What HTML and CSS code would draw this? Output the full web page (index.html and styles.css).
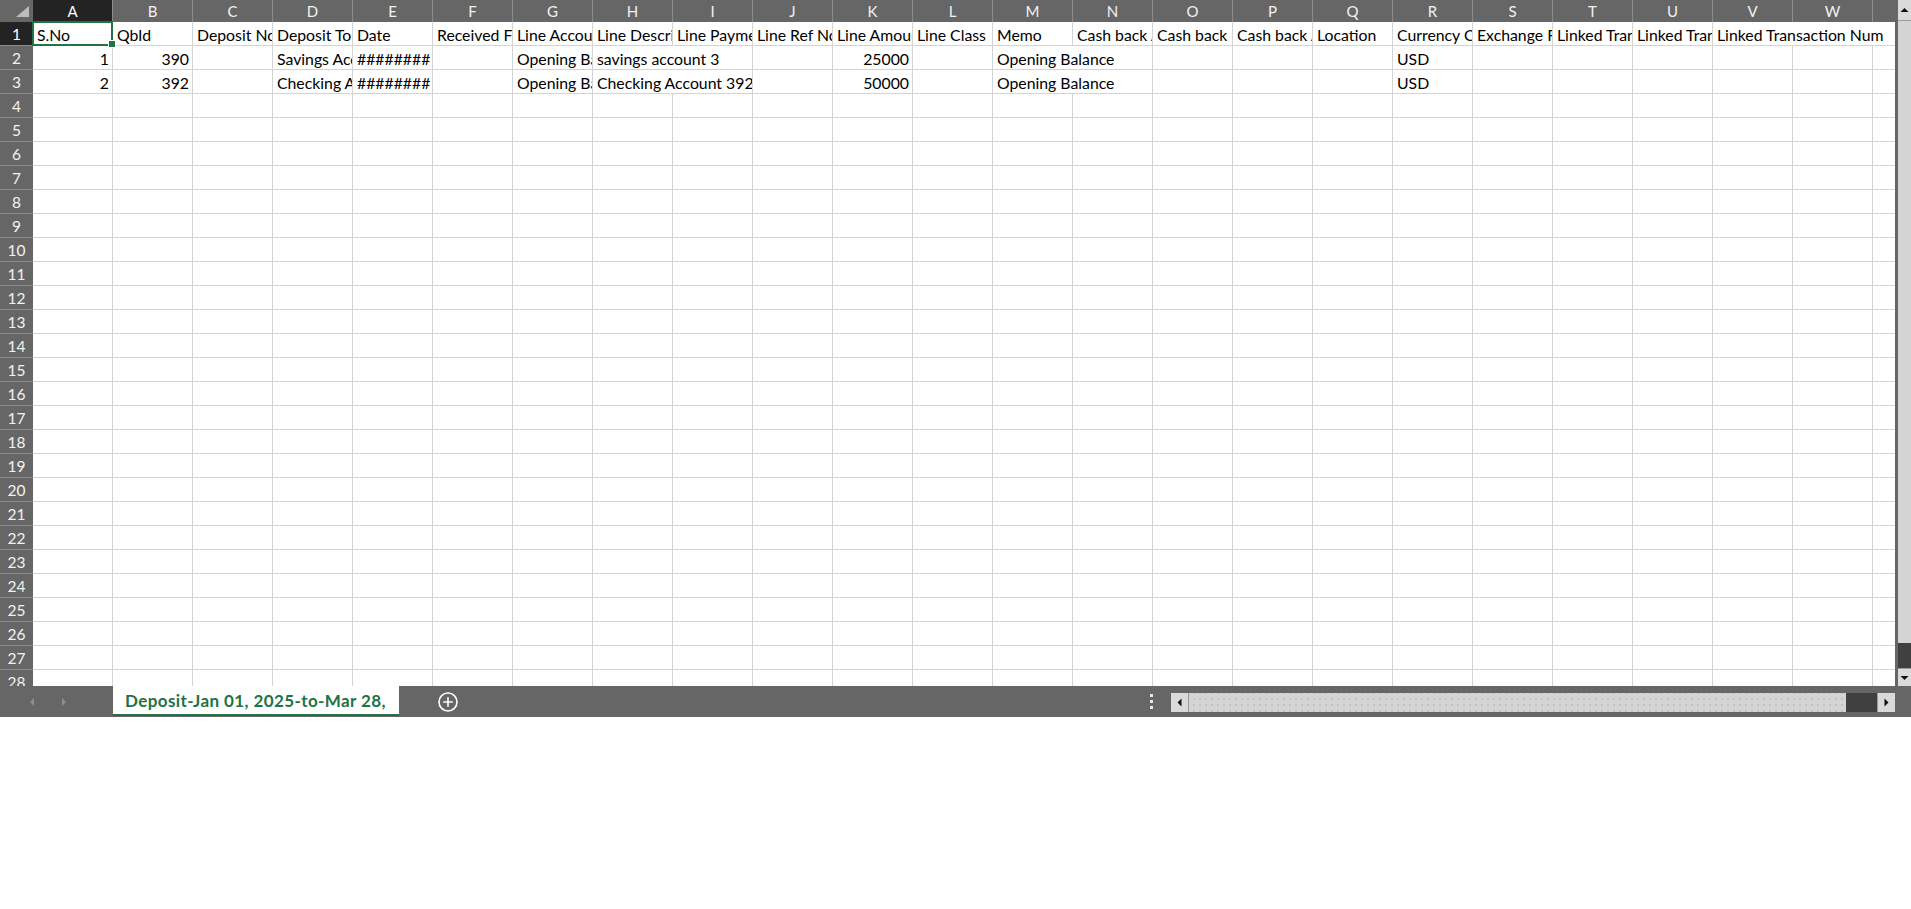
FILE: index.html
```html
<!DOCTYPE html>
<html>
<head>
<meta charset="utf-8">
<title>Deposit</title>
<link rel="stylesheet" href="styles.css">
</head>
<body>
<div class="app">
  <div class="main">
    <div class="sheet">
      <div class="row colheads">
        <div class="corner"><svg width="33" height="22" viewBox="0 0 33 22"><polygon points="29,6 29,17 16,17" fill="#bcbcbc"/></svg></div>
        <div class="ch sel">A</div><div class="ch">B</div><div class="ch">C</div><div class="ch">D</div><div class="ch">E</div><div class="ch">F</div><div class="ch">G</div><div class="ch">H</div><div class="ch">I</div><div class="ch">J</div><div class="ch">K</div><div class="ch">L</div><div class="ch">M</div><div class="ch">N</div><div class="ch">O</div><div class="ch">P</div><div class="ch">Q</div><div class="ch">R</div><div class="ch">S</div><div class="ch">T</div><div class="ch">U</div><div class="ch">V</div><div class="ch">W</div><div class="ch last"></div>
      </div>
      <div class="row">
        <div class="rh sel">1</div>
        <div class="cell active">S.No<span class="selbox"></span><span class="handle"></span></div>
        <div class="cell">QbId</div>
        <div class="cell">Deposit No</div>
        <div class="cell">Deposit To</div>
        <div class="cell">Date</div>
        <div class="cell">Received From</div>
        <div class="cell">Line Account</div>
        <div class="cell">Line Description</div>
        <div class="cell">Line Payment Method</div>
        <div class="cell">Line Ref No</div>
        <div class="cell">Line Amount</div>
        <div class="cell">Line Class</div>
        <div class="cell">Memo</div>
        <div class="cell">Cash back Account</div>
        <div class="cell">Cash back Memo</div>
        <div class="cell">Cash back Amount</div>
        <div class="cell">Location</div>
        <div class="cell">Currency Code</div>
        <div class="cell">Exchange Rate</div>
        <div class="cell">Linked Transaction Id</div>
        <div class="cell">Linked Transaction Type</div>
        <div class="cell span3">Linked Transaction Num</div>
      </div>
      <div class="row">
        <div class="rh">2</div>
        <div class="cell num">1</div>
        <div class="cell num">390</div>
        <div class="cell"></div>
        <div class="cell">Savings Account 3</div>
        <div class="cell">########</div>
        <div class="cell"></div>
        <div class="cell">Opening Balance</div>
        <div class="cell span2">savings account 3</div>
        <div class="cell"></div>
        <div class="cell num">25000</div>
        <div class="cell"></div>
        <div class="cell span2">Opening Balance</div>
        <div class="cell"></div><div class="cell"></div><div class="cell"></div>
        <div class="cell">USD</div>
        <div class="cell"></div><div class="cell"></div><div class="cell"></div><div class="cell"></div><div class="cell"></div><div class="cell last"></div>
      </div>
      <div class="row">
        <div class="rh">3</div>
        <div class="cell num">2</div>
        <div class="cell num">392</div>
        <div class="cell"></div>
        <div class="cell">Checking Account 392</div>
        <div class="cell">########</div>
        <div class="cell"></div>
        <div class="cell">Opening Balance</div>
        <div class="cell span2">Checking Account 392</div>
        <div class="cell"></div>
        <div class="cell num">50000</div>
        <div class="cell"></div>
        <div class="cell span2">Opening Balance</div>
        <div class="cell"></div><div class="cell"></div><div class="cell"></div>
        <div class="cell">USD</div>
        <div class="cell"></div><div class="cell"></div><div class="cell"></div><div class="cell"></div><div class="cell"></div><div class="cell last"></div>
      </div>
      <div class="row"><div class="rh">4</div><div class="blank"></div></div>
      <div class="row"><div class="rh">5</div><div class="blank"></div></div>
      <div class="row"><div class="rh">6</div><div class="blank"></div></div>
      <div class="row"><div class="rh">7</div><div class="blank"></div></div>
      <div class="row"><div class="rh">8</div><div class="blank"></div></div>
      <div class="row"><div class="rh">9</div><div class="blank"></div></div>
      <div class="row"><div class="rh">10</div><div class="blank"></div></div>
      <div class="row"><div class="rh">11</div><div class="blank"></div></div>
      <div class="row"><div class="rh">12</div><div class="blank"></div></div>
      <div class="row"><div class="rh">13</div><div class="blank"></div></div>
      <div class="row"><div class="rh">14</div><div class="blank"></div></div>
      <div class="row"><div class="rh">15</div><div class="blank"></div></div>
      <div class="row"><div class="rh">16</div><div class="blank"></div></div>
      <div class="row"><div class="rh">17</div><div class="blank"></div></div>
      <div class="row"><div class="rh">18</div><div class="blank"></div></div>
      <div class="row"><div class="rh">19</div><div class="blank"></div></div>
      <div class="row"><div class="rh">20</div><div class="blank"></div></div>
      <div class="row"><div class="rh">21</div><div class="blank"></div></div>
      <div class="row"><div class="rh">22</div><div class="blank"></div></div>
      <div class="row"><div class="rh">23</div><div class="blank"></div></div>
      <div class="row"><div class="rh">24</div><div class="blank"></div></div>
      <div class="row"><div class="rh">25</div><div class="blank"></div></div>
      <div class="row"><div class="rh">26</div><div class="blank"></div></div>
      <div class="row"><div class="rh">27</div><div class="blank"></div></div>
      <div class="row"><div class="rh">28</div><div class="blank"></div></div>
    </div>
    <div class="vscroll">
      <div class="vbtn"><svg width="13" height="20" viewBox="0 0 13 20"><polygon points="2.5,12 10.5,12 6.5,8" fill="#111"/></svg></div>
      <div class="vtrack"></div>
      <div class="vthumb"></div>
      <div class="vbtn down"><svg width="13" height="17" viewBox="0 0 13 17"><polygon points="2.5,7 10.5,7 6.5,11" fill="#111"/></svg></div>
    </div>
  </div>
  <div class="tabbar">
    <div class="nav">
      <svg class="navarrow" width="6" height="10" viewBox="0 0 6 10"><polygon points="5,1 5,9 1,5" fill="#8e8e8e"/></svg>
      <svg class="navarrow" width="6" height="10" viewBox="0 0 6 10"><polygon points="1,1 1,9 5,5" fill="#8e8e8e"/></svg>
    </div>
    <div class="tab">Deposit-Jan 01, 2025-to-Mar 28,</div>
    <div class="add"><svg width="22" height="22" viewBox="0 0 22 22"><circle cx="11" cy="11" r="9" fill="none" stroke="#fff" stroke-width="1.6"/><path d="M11 6.2V15.8M6.2 11H15.8" stroke="#fff" stroke-width="1.6"/></svg></div>
    <div class="spacer"></div>
    <div class="dots"><span></span><span></span><span></span></div>
    <div class="hscroll">
      <div class="hbtn"><svg width="17" height="19" viewBox="0 0 17 19"><polygon points="10.5,5.5 10.5,13.5 6.5,9.5" fill="#111"/></svg></div>
      <div class="htrack"></div>
      <div class="hthumb"></div>
      <div class="hbtn right"><svg width="17" height="19" viewBox="0 0 17 19"><polygon points="6.5,5.5 6.5,13.5 10.5,9.5" fill="#111"/></svg></div>
    </div>
  </div>
</div>
</body>
</html>
```

FILE: styles.css
```css
html, body {
  margin: 0;
  padding: 0;
  background: #ffffff;
}

.app {
  width: 1911px;
  font-family: Lato, "Open Sans", "Liberation Sans", sans-serif;
}

.main {
  display: flex;
  height: 686px;
  background: #666666;
  gap: 3px;
}

.sheet {
  width: 1895px;
  flex: 0 0 1895px;
  height: 686px;
  overflow: hidden;
  background: #ffffff;
}

.row {
  display: grid;
  grid-template-columns: 33px repeat(23, 80px) 22px;
  height: 24px;
}

.colheads {
  height: 22px;
  background: #666666;
}

.corner {
  height: 22px;
  background: #666666;
}

.corner svg {
  display: block;
}

.ch {
  height: 22px;
  box-sizing: border-box;
  border-right: 1px solid #8c8c8c;
  color: #f2f2f2;
  font-size: 15px;
  line-height: 22px;
  text-align: center;
}

.ch.sel {
  background: #232323;
  color: #ffffff;
}

.ch.last {
  border-right: none;
}

.rh {
  background: #666666;
  color: #f2f2f2;
  font-size: 15.5px;
  line-height: 24px;
  text-align: center;
  box-sizing: border-box;
  border-bottom: 1px solid #8c8c8c;
  height: 24px;
}

.rh.sel {
  background: #232323;
  color: #ffffff;
}

.cell {
  position: relative;
  box-sizing: border-box;
  height: 24px;
  border-right: 1px solid #d4d4d4;
  border-bottom: 1px solid #d4d4d4;
  padding: 0 3px 0 4px;
  overflow: hidden;
  white-space: nowrap;
  font-size: 15.8px;
  line-height: 25px;
  color: #000000;
}

.cell.active {
  overflow: visible;
}

.cell.num {
  text-align: right;
}

.cell.span2 {
  grid-column: span 2;
}

.cell.span3 {
  grid-column: span 3;
  border-right: none;
}

.cell.last {
  border-right: none;
}

.selbox {
  position: absolute;
  left: -1px;
  top: -1px;
  width: 81px;
  height: 25px;
  box-sizing: border-box;
  border: 2px solid #217346;
  pointer-events: none;
}

.handle {
  position: absolute;
  right: -4px;
  bottom: -3px;
  width: 6px;
  height: 6px;
  background: #217346;
  border: 1px solid #ffffff;
  box-sizing: content-box;
  z-index: 2;
}

.blank {
  grid-column: span 24;
  box-sizing: border-box;
  height: 24px;
  border-bottom: 1px solid #d4d4d4;
  background: repeating-linear-gradient(90deg, transparent 0 79px, #d4d4d4 79px 80px);
}

.vscroll {
  width: 13px;
  flex: 0 0 13px;
  display: flex;
  flex-direction: column;
  background: #d4d4d4;
}

.vbtn {
  height: 20px;
  background: #dadada;
  border-bottom: 1px solid #9a9a9a;
}

.vbtn svg, .hbtn svg {
  display: block;
}

.vbtn.down {
  height: 17px;
  border-bottom: none;
  border-top: 1px solid #9a9a9a;
}

.vtrack {
  flex: 1;
  background: #d4d4d4;
}

.vthumb {
  height: 25px;
  background: #404040;
}

.tabbar {
  display: flex;
  height: 31px;
  background: #666666;
}

.nav {
  width: 113px;
  display: flex;
  align-items: center;
  gap: 26px;
  padding-left: 29px;
  box-sizing: border-box;
}

.navarrow {
  display: block;
}

.tab {
  width: 286px;
  box-sizing: border-box;
  height: 30px;
  background: #ffffff;
  border-bottom: 2px solid #217346;
  color: #217346;
  font-weight: 700;
  font-size: 17px;
  letter-spacing: 0.4px;
  line-height: 29px;
  padding-left: 12px;
  white-space: nowrap;
  overflow: hidden;
}

.add {
  margin-left: 38px;
  display: flex;
  align-items: center;
}

.add svg {
  display: block;
}

.spacer {
  flex: 1;
}

.dots {
  width: 4px;
  margin-right: 17px;
  display: flex;
  flex-direction: column;
  justify-content: center;
  gap: 3px;
}

.dots span {
  display: block;
  width: 3px;
  height: 3px;
  background: #e6e6e6;
}

.hscroll {
  width: 724px;
  height: 19px;
  margin-top: 7px;
  margin-right: 16px;
  display: flex;
  background: #d4d4d4;
}

.hbtn {
  width: 17px;
  background: #dadada;
  border-right: 1px solid #9a9a9a;
}

.hbtn.right {
  border-right: none;
  border-left: 1px solid #9a9a9a;
}

.htrack {
  flex: 1;
  background-color: #d4d4d4;
  background-image: radial-gradient(circle, #b8b8b8 0.6px, transparent 0.9px);
  background-size: 6px 6px;
  background-position: 2px 3px;
}

.hthumb {
  width: 31px;
  background: #404040;
}
```
